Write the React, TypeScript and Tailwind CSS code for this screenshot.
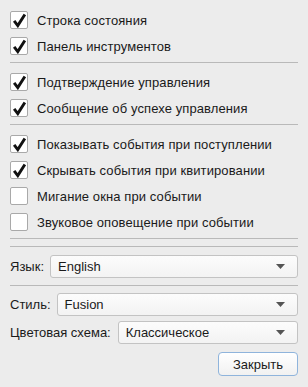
import React from "react";

const font = { fontFamily: '"Liberation Sans", Arial, sans-serif' };

function Check({ checked, label }: { checked: boolean; label: string }) {
  return (
    <div className="flex items-center h-[26px]">
      <div className="w-[18px] h-[18px] bg-white border border-[#a9a9a9] rounded-[2px] flex items-center justify-center">
        {checked && (
          <svg width="15" height="15" viewBox="0 0 14 14">
            <path d="M2 7.4 L5.4 11.8 L12 1.4" fill="none" stroke="#111" strokeWidth="2.7" strokeLinecap="butt" strokeLinejoin="miter" />
          </svg>
        )}
      </div>
      <span className="ml-[9px] text-[13px] text-[#1a1a1a] leading-none tracking-[0.1px]">{label}</span>
    </div>
  );
}

function Sep({ className }: { className: string }) {
  return <div className={`h-px bg-[#b9b9b9] ${className}`} />;
}

function Combo({ value, className }: { value: string; className?: string }) {
  return (
    <div className={`flex-1 h-[23px] flex items-center justify-between pl-[7px] pr-[12px] border border-[#c3c3c3] rounded-[3px] bg-gradient-to-b from-[#fcfcfc] to-[#f3f3f3] ${className ?? ""}`}>
      <span className="text-[13px] text-[#1a1a1a] leading-none">{value}</span>
      <svg width="9" height="5" viewBox="0 0 9 5">
        <path d="M0 0 H9 L4.5 5 Z" fill="#555" />
      </svg>
    </div>
  );
}

export default function App() {
  return (
    <div className="w-[308px] h-[387px] bg-[#ececec] px-[10px] pt-[7px] flex flex-col" style={font}>
      <Check checked label="Строка состояния" />
      <Check checked label="Панель инструментов" />
      <Sep className="mt-[3px]" />
      <div className="mt-[6px]">
        <Check checked label="Подтверждение управления" />
        <Check checked label="Сообщение об успехе управления" />
      </div>
      <Sep className="mt-[3px]" />
      <div className="mt-[6px]">
        <Check checked label="Показывать события при поступлении" />
        <Check checked label="Скрывать события при квитировании" />
        <Check checked={false} label="Мигание окна при событии" />
        <Check checked={false} label="Звуковое оповещение при событии" />
      </div>
      <Sep className="mt-[3px]" />
      <Sep className="mt-[7px]" />
      <div className="mt-[8px] flex items-center">
        <span className="text-[13px] text-[#1a1a1a] mr-[6px]">Язык:</span>
        <Combo value="English" />
      </div>
      <Sep className="mt-[7px]" />
      <div className="mt-[7px] flex items-center">
        <span className="text-[13px] text-[#1a1a1a] mr-[6px]">Стиль:</span>
        <Combo value="Fusion" />
      </div>
      <div className="mt-[5px] flex items-center">
        <span className="text-[13px] text-[#1a1a1a] mr-[7px]">Цветовая схема:</span>
        <Combo value="Классическое" />
      </div>
      <div className="mt-[8px] flex justify-end">
        <button className="w-[80px] h-[24px] border border-[#8fb4dc] rounded-[4px] bg-gradient-to-b from-[#ffffff] to-[#f1f1f1] text-[13px] text-[#1a1a1a] leading-none">
          Закрыть
        </button>
      </div>
    </div>
  );
}
